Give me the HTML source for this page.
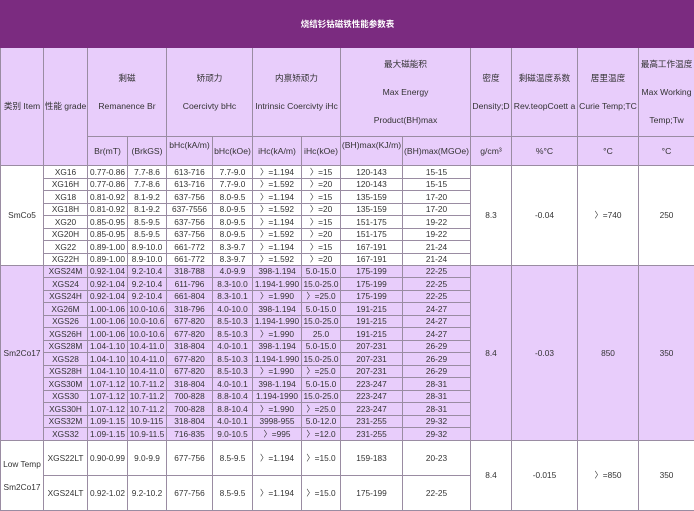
<!DOCTYPE html>
<html><head><meta charset="utf-8"><style>
*{margin:0;padding:0;box-sizing:border-box}
body{width:694px;height:510px;overflow:hidden;background:#fff;font-family:"Liberation Sans","Noto Sans CJK SC",sans-serif;}
table{border-collapse:collapse;table-layout:fixed;width:694px;font-size:8.3px;color:#333}
td{border:1px solid #9a8ca2;text-align:center;vertical-align:middle;padding:0;white-space:nowrap;overflow:hidden;line-height:1}
.t td{background:#7b2b80;color:#fff;font-weight:bold;font-size:8.5px;border-color:#7b2b80}
.h td{background:#e8cdfb;font-size:8.6px}
.p td{background:#e8cdfb}
.h p{margin:0;line-height:28px}
</style></head><body>
<table>
<colgroup><col style="width:43px"><col style="width:44px"><col style="width:40px"><col style="width:39px"><col style="width:46px"><col style="width:40px"><col style="width:49px"><col style="width:39px"><col style="width:62px"><col style="width:68px"><col style="width:41px"><col style="width:66px"><col style="width:61px"><col style="width:56px"></colgroup>
<tr class="t" style="height:47px"><td colspan="14">烧结钐钴磁铁性能参数表</td></tr>
<tr class="h" style="height:89px"><td rowspan="2">类别 Item</td><td rowspan="2">性能 grade</td>
<td colspan="2"><p>剩磁</p><p>Remanence Br</p></td>
<td colspan="2"><p>矫顽力</p><p>Coercivty bHc</p></td>
<td colspan="2"><p>内禀矫顽力</p><p>Intrinsic Coercivty iHc</p></td>
<td colspan="2"><p>最大磁能积</p><p>Max Energy</p><p>Product(BH)max</p></td>
<td><p>密度</p><p>Density;D</p></td>
<td><p>剩磁温度系数</p><p>Rev.teopCoett a</p></td>
<td><p>居里温度</p><p>Curie Temp;TC</p></td>
<td><p>最高工作温度</p><p>Max Working</p><p>Temp;Tw</p></td></tr>
<tr class="h" style="height:29px"><td>Br(mT)</td><td>(BrkGS)</td><td style="vertical-align:top;padding-top:4px">bHc(kA/m)</td><td>bHc(kOe)</td><td>iHc(kA/m)</td><td>iHc(kOe)</td><td style="vertical-align:top;padding-top:4px">(BH)max(KJ/m)</td><td>(BH)max(MGOe)</td><td>g/cm³</td><td>%°C</td><td>°C</td><td>°C</td></tr>
<tr style="height:13px"><td rowspan="8">SmCo5</td><td>XG16</td><td>0.77-0.86</td><td>7.7-8.6</td><td>613-716</td><td>7.7-9.0</td><td>〉=1.194</td><td>〉=15</td><td>120-143</td><td>15-15</td><td rowspan="8">8.3</td><td rowspan="8">-0.04</td><td rowspan="8">〉=740</td><td rowspan="8">250</td></tr>
<tr style="height:12px"><td>XG16H</td><td>0.77-0.86</td><td>7.7-8.6</td><td>613-716</td><td>7.7-9.0</td><td>〉=1.592</td><td>〉=20</td><td>120-143</td><td>15-15</td></tr>
<tr style="height:13px"><td>XG18</td><td>0.81-0.92</td><td>8.1-9.2</td><td>637-756</td><td>8.0-9.5</td><td>〉=1.194</td><td>〉=15</td><td>135-159</td><td>17-20</td></tr>
<tr style="height:12px"><td>XG18H</td><td>0.81-0.92</td><td>8.1-9.2</td><td>637-7556</td><td>8.0-9.5</td><td>〉=1.592</td><td>〉=20</td><td>135-159</td><td>17-20</td></tr>
<tr style="height:13px"><td>XG20</td><td>0.85-0.95</td><td>8.5-9.5</td><td>637-756</td><td>8.0-9.5</td><td>〉=1.194</td><td>〉=15</td><td>151-175</td><td>19-22</td></tr>
<tr style="height:12px"><td>XG20H</td><td>0.85-0.95</td><td>8.5-9.5</td><td>637-756</td><td>8.0-9.5</td><td>〉=1.592</td><td>〉=20</td><td>151-175</td><td>19-22</td></tr>
<tr style="height:13px"><td>XG22</td><td>0.89-1.00</td><td>8.9-10.0</td><td>661-772</td><td>8.3-9.7</td><td>〉=1.194</td><td>〉=15</td><td>167-191</td><td>21-24</td></tr>
<tr style="height:12px"><td>XG22H</td><td>0.89-1.00</td><td>8.9-10.0</td><td>661-772</td><td>8.3-9.7</td><td>〉=1.592</td><td>〉=20</td><td>167-191</td><td>21-24</td></tr>
<tr class="p" style="height:12px"><td rowspan="14">Sm2Co17</td><td>XGS24M</td><td>0.92-1.04</td><td>9.2-10.4</td><td>318-788</td><td>4.0-9.9</td><td>398-1.194</td><td>5.0-15.0</td><td>175-199</td><td>22-25</td><td rowspan="14">8.4</td><td rowspan="14">-0.03</td><td rowspan="14">850</td><td rowspan="14">350</td></tr>
<tr class="p" style="height:13px"><td>XGS24</td><td>0.92-1.04</td><td>9.2-10.4</td><td>611-796</td><td>8.3-10.0</td><td>1.194-1.990</td><td>15.0-25.0</td><td>175-199</td><td>22-25</td></tr>
<tr class="p" style="height:12px"><td>XGS24H</td><td>0.92-1.04</td><td>9.2-10.4</td><td>661-804</td><td>8.3-10.1</td><td>〉=1.990</td><td>〉=25.0</td><td>175-199</td><td>22-25</td></tr>
<tr class="p" style="height:13px"><td>XG26M</td><td>1.00-1.06</td><td>10.0-10.6</td><td>318-796</td><td>4.0-10.0</td><td>398-1.194</td><td>5.0-15.0</td><td>191-215</td><td>24-27</td></tr>
<tr class="p" style="height:12px"><td>XGS26</td><td>1.00-1.06</td><td>10.0-10.6</td><td>677-820</td><td>8.5-10.3</td><td>1.194-1.990</td><td>15.0-25.0</td><td>191-215</td><td>24-27</td></tr>
<tr class="p" style="height:13px"><td>XGS26H</td><td>1.00-1.06</td><td>10.0-10.6</td><td>677-820</td><td>8.5-10.3</td><td>〉=1.990</td><td>25.0</td><td>191-215</td><td>24-27</td></tr>
<tr class="p" style="height:12px"><td>XGS28M</td><td>1.04-1.10</td><td>10.4-11.0</td><td>318-804</td><td>4.0-10.1</td><td>398-1.194</td><td>5.0-15.0</td><td>207-231</td><td>26-29</td></tr>
<tr class="p" style="height:13px"><td>XGS28</td><td>1.04-1.10</td><td>10.4-11.0</td><td>677-820</td><td>8.5-10.3</td><td>1.194-1.990</td><td>15.0-25.0</td><td>207-231</td><td>26-29</td></tr>
<tr class="p" style="height:12px"><td>XGS28H</td><td>1.04-1.10</td><td>10.4-11.0</td><td>677-820</td><td>8.5-10.3</td><td>〉=1.990</td><td>〉=25.0</td><td>207-231</td><td>26-29</td></tr>
<tr class="p" style="height:13px"><td>XGS30M</td><td>1.07-1.12</td><td>10.7-11.2</td><td>318-804</td><td>4.0-10.1</td><td>398-1.194</td><td>5.0-15.0</td><td>223-247</td><td>28-31</td></tr>
<tr class="p" style="height:12px"><td>XGS30</td><td>1.07-1.12</td><td>10.7-11.2</td><td>700-828</td><td>8.8-10.4</td><td>1.194-1990</td><td>15.0-25.0</td><td>223-247</td><td>28-31</td></tr>
<tr class="p" style="height:13px"><td>XGS30H</td><td>1.07-1.12</td><td>10.7-11.2</td><td>700-828</td><td>8.8-10.4</td><td>〉=1.990</td><td>〉=25.0</td><td>223-247</td><td>28-31</td></tr>
<tr class="p" style="height:12px"><td>XGS32M</td><td>1.09-1.15</td><td>10.9-115</td><td>318-804</td><td>4.0-10.1</td><td>3998-955</td><td>5.0-12.0</td><td>231-255</td><td>29-32</td></tr>
<tr class="p" style="height:13px"><td>XGS32</td><td>1.09-1.15</td><td>10.9-11.5</td><td>716-835</td><td>9.0-10.5</td><td>〉=995</td><td>〉=12.0</td><td>231-255</td><td>29-32</td></tr>
<tr style="height:35px"><td rowspan="2" style="line-height:2.7">Low Temp<br>Sm2Co17</td><td>XGS22LT</td><td>0.90-0.99</td><td>9.0-9.9</td><td>677-756</td><td>8.5-9.5</td><td>〉=1.194</td><td>〉=15.0</td><td>159-183</td><td>20-23</td><td rowspan="2">8.4</td><td rowspan="2">-0.015</td><td rowspan="2">〉=850</td><td rowspan="2">350</td></tr>
<tr style="height:35px"><td>XGS24LT</td><td>0.92-1.02</td><td>9.2-10.2</td><td>677-756</td><td>8.5-9.5</td><td>〉=1.194</td><td>〉=15.0</td><td>175-199</td><td>22-25</td></tr>
</table>
</body></html>
